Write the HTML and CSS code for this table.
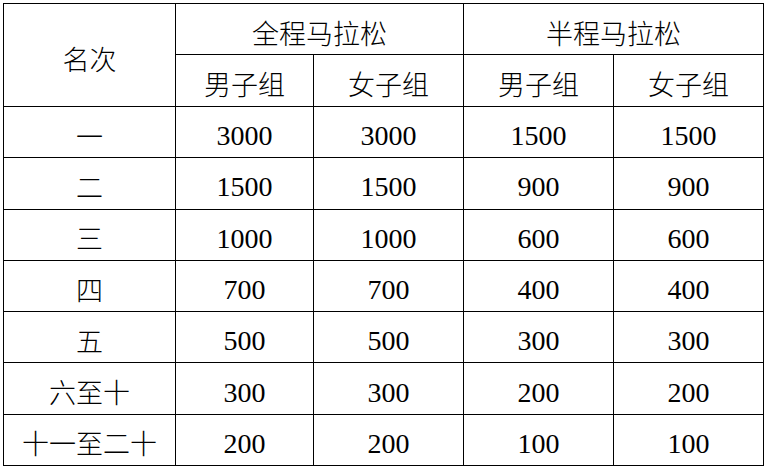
FILE: index.html
```html
<!DOCTYPE html>
<html lang="zh-CN">
<head>
<meta charset="utf-8">
<link rel="stylesheet" href="styles.css">
</head>
<body>
<table class="prize">
  <colgroup>
    <col class="c-rank">
    <col class="c-a">
    <col class="c-b">
    <col class="c-b">
    <col class="c-b">
  </colgroup>
  <tr class="h1">
    <td rowspan="2">名次</td>
    <td colspan="2">全程马拉松</td>
    <td colspan="2">半程马拉松</td>
  </tr>
  <tr class="h2">
    <td>男子组</td><td>女子组</td><td>男子组</td><td>女子组</td>
  </tr>
  <tr class="r"><td>一</td><td class="n">3000</td><td class="n">3000</td><td class="n">1500</td><td class="n">1500</td></tr>
  <tr class="r"><td>二</td><td class="n">1500</td><td class="n">1500</td><td class="n">900</td><td class="n">900</td></tr>
  <tr class="r"><td>三</td><td class="n">1000</td><td class="n">1000</td><td class="n">600</td><td class="n">600</td></tr>
  <tr class="r"><td>四</td><td class="n">700</td><td class="n">700</td><td class="n">400</td><td class="n">400</td></tr>
  <tr class="r"><td>五</td><td class="n">500</td><td class="n">500</td><td class="n">300</td><td class="n">300</td></tr>
  <tr class="r"><td>六至十</td><td class="n">300</td><td class="n">300</td><td class="n">200</td><td class="n">200</td></tr>
  <tr class="r"><td>十一至二十</td><td class="n">200</td><td class="n">200</td><td class="n">100</td><td class="n">100</td></tr>
</table>
</body>
</html>
```
FILE: styles.css
```css
html, body {
  margin: 0;
  padding: 0;
  background: #fff;
}
body {
  padding: 3px 0 0 3px;
}
.prize {
  border-collapse: collapse;
  table-layout: fixed;
  width: 761px;
  font-family: "Noto Sans CJK SC", "Liberation Serif", serif;
  font-size: 27px;
  font-weight: 300;
  color: #000;
}
.c-rank { width: 172px; }
.c-a { width: 138px; }
.c-b { width: 150px; }
.prize td {
  border: 1px solid #000;
  padding: 6px 0 0 0;
  text-align: center;
  vertical-align: middle;
  line-height: 1;
  white-space: nowrap;
}
.h1 { height: 51px; }
.h2 { height: 52px; }
.r { height: 51.3px; }
.prize td.n {
  font-family: "Liberation Serif", serif;
  font-size: 28px;
  font-weight: 400;
  padding-top: 8px;
}
```
